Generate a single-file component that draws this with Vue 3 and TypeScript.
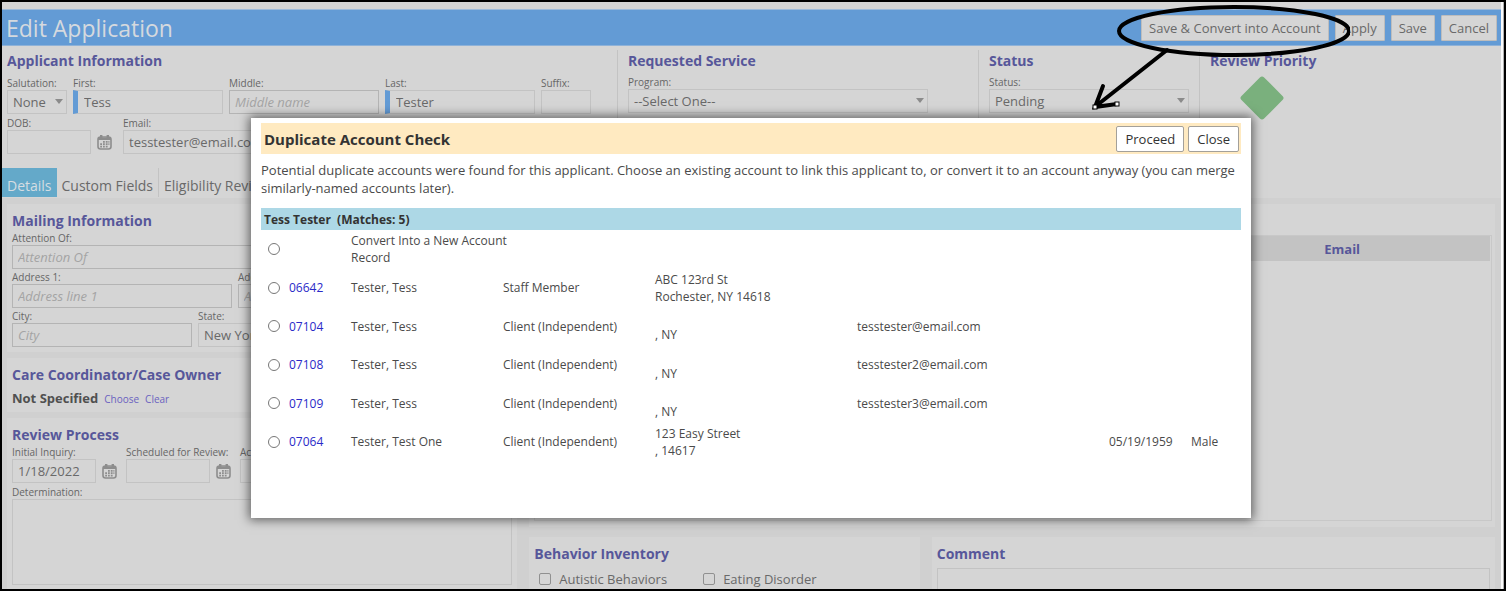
<script setup lang="ts">
import { ref } from 'vue'

interface Match {
  id: string
  name: string[]
  type: string
  address: string[]
  email: string
  dob: string
  sex: string
}

const matches: Match[] = [
  { id: '', name: ['Convert Into a New Account', 'Record'], type: '', address: [], email: '', dob: '', sex: '' },
  { id: '06642', name: ['Tester, Tess'], type: 'Staff Member', address: ['ABC 123rd St', 'Rochester, NY 14618'], email: '', dob: '', sex: '' },
  { id: '07104', name: ['Tester, Tess'], type: 'Client (Independent)', address: ['', ', NY'], email: 'tesstester@email.com', dob: '', sex: '' },
  { id: '07108', name: ['Tester, Tess'], type: 'Client (Independent)', address: ['', ', NY'], email: 'tesstester2@email.com', dob: '', sex: '' },
  { id: '07109', name: ['Tester, Tess'], type: 'Client (Independent)', address: ['', ', NY'], email: 'tesstester3@email.com', dob: '', sex: '' },
  { id: '07064', name: ['Tester, Test One'], type: 'Client (Independent)', address: ['123 Easy Street', ', 14617'], email: '', dob: '05/19/1959', sex: 'Male' },
]
const chosen = ref<string | null>(null)
const actions = ['Save & Convert into Account', 'Apply', 'Save', 'Cancel']
const tabs = ['Details', 'Custom Fields', 'Eligibility Review']
const behaviors = ['Autistic Behaviors', 'Eating Disorder']
</script>

<template>
  <div class="frame">
    <svg class="defs" aria-hidden="true">
      <symbol id="calendar" viewBox="0 0 15 16">
        <rect x="1" y="3" width="13" height="12" rx="2.5" fill="none" stroke="currentColor" stroke-width="1.6" />
        <path d="M1 3.5h13v2.5H1zM3 1h2.4v3H3zM9.6 1H12v3H9.6z" fill="currentColor" />
        <path d="M6 7.8h1.8M8.8 7.8h1.8M11.4 7.8h1M3.2 10.2H5M6 10.2h1.8M8.8 10.2h1.8M11.4 10.2h1M3.2 12.6H5M6 12.6h1.8M8.8 12.6h1.8" stroke="currentColor" stroke-width="1.7" />
      </symbol>
    </svg>

    <div class="page">
      <header class="bar">
        <h1>Edit Application</h1>
        <div class="actions">
          <button v-for="a in actions" :key="a" type="button">{{ a }}</button>
        </div>
      </header>

      <div class="summary">
        <section class="applicant">
          <h2>Applicant Information</h2>
          <div class="fields first-row">
            <div class="field w60">
              <label for="sal">Salutation:</label>
              <span class="select"><select id="sal"><option>None</option></select></span>
            </div>
            <div class="field w150"><label for="first">First:</label><input id="first" class="required" value="Tess"></div>
            <div class="field w150"><label for="middle">Middle:</label><input id="middle" class="empty" placeholder="Middle name"></div>
            <div class="field w150"><label for="last">Last:</label><input id="last" class="required" value="Tester"></div>
            <div class="field w50"><label for="suffix">Suffix:</label><input id="suffix"></div>
          </div>
          <div class="fields">
            <div class="field w84"><label for="dob">DOB:</label><input id="dob"></div>
            <button class="cal" type="button" aria-label="Pick date of birth"><svg><use href="#calendar" /></svg></button>
            <div class="field w220"><label for="email">Email:</label><input id="email" value="tesstester@email.com"></div>
          </div>
          <nav class="tabs">
            <button v-for="(t, i) in tabs" :key="t" type="button" :class="{ active: i === 0 }">{{ t }}</button>
          </nav>
        </section>
        <section class="ruled">
          <h2>Requested Service</h2>
          <div class="field w300">
            <label for="program">Program:</label>
            <span class="select"><select id="program"><option>--Select One--</option></select></span>
          </div>
        </section>
        <section class="ruled">
          <h2>Status</h2>
          <div class="field w200">
            <label for="status">Status:</label>
            <span class="select"><select id="status"><option>Pending</option></select></span>
          </div>
        </section>
        <section class="ruled">
          <h2>Review Priority</h2>
          <svg class="diamond" viewBox="0 0 46 46" role="img" aria-label="Low priority"><rect x="7" y="7" width="32" height="32" rx="3" transform="rotate(45 23 23)" /></svg>
        </section>
      </div>

      <main class="content">
        <div class="column">
          <section class="panel mailing">
            <h2>Mailing Information</h2>
            <div class="field"><label for="attn">Attention Of:</label><input id="attn" class="empty" placeholder="Attention Of"></div>
            <div class="fields">
              <div class="field w220"><label for="a1">Address 1:</label><input id="a1" class="empty" placeholder="Address line 1"></div>
              <div class="field w220"><label for="a2">Address 2:</label><input id="a2" class="empty" placeholder="Address line 2"></div>
            </div>
            <div class="fields">
              <div class="field w180"><label for="city">City:</label><input id="city" class="empty" placeholder="City"></div>
              <div class="field w150"><label for="state">State:</label><span class="select"><select id="state"><option>New York</option></select></span></div>
            </div>
          </section>
          <section class="panel care">
            <h2>Care Coordinator/Case Owner</h2>
            <p><strong>Not Specified</strong><a href="#choose">Choose</a><a href="#clear">Clear</a></p>
          </section>
          <section class="panel review">
            <h2>Review Process</h2>
            <div class="fields">
              <div class="field w84"><label for="inq">Initial Inquiry:</label><input id="inq" value="1/18/2022"></div>
              <button class="cal" type="button" aria-label="Pick inquiry date"><svg><use href="#calendar" /></svg></button>
              <div class="field w84"><label for="sched">Scheduled for Review:</label><input id="sched"></div>
              <button class="cal" type="button" aria-label="Pick review date"><svg><use href="#calendar" /></svg></button>
              <div class="field w84"><label for="act">Actual:</label><input id="act"></div>
            </div>
            <div class="field"><label for="det">Determination:</label><textarea id="det"></textarea></div>
          </section>
        </div>
        <div class="column wide">
          <section class="panel contacts">
            <h2>Contacts</h2>
            <div class="grid-box">
              <table>
                <thead><tr><th class="rest">Name</th><th>Email</th></tr></thead>
              </table>
            </div>
          </section>
          <div class="pair">
            <section class="panel behavior">
              <h2>Behavior Inventory</h2>
              <div class="checks">
                <label v-for="b in behaviors" :key="b"><input type="checkbox">{{ b }}</label>
              </div>
            </section>
            <section class="panel comment">
              <h2 id="comment-title">Comment</h2>
              <textarea aria-labelledby="comment-title"></textarea>
            </section>
          </div>
        </div>
      </main>
    </div>
    <div class="scroll" aria-hidden="true"></div>

    <div class="overlay">
      <div class="modal" role="dialog" aria-labelledby="dup-title">
        <div class="modal-head">
          <h2 id="dup-title">Duplicate Account Check</h2>
          <button type="button">Proceed</button>
          <button type="button">Close</button>
        </div>
        <p class="message">Potential duplicate accounts were found for this applicant. Choose an existing account to link this applicant to, or convert it to an account anyway (you can merge similarly-named accounts later).</p>
        <table class="matches">
          <colgroup><col class="c-pick"><col class="c-id"><col class="c-name"><col class="c-name"><col class="c-addr"><col class="c-mail"><col class="c-dob"><col></colgroup>
          <thead><tr><th colspan="8">Tess Tester &nbsp;(Matches: 5)</th></tr></thead>
          <tbody>
            <tr v-for="m in matches" :key="m.id">
              <td class="pick"><input v-model="chosen" type="radio" name="match" :value="m.id" :aria-label="m.id || m.name.join(' ')"></td>
              <td><a v-if="m.id" :href="'#' + m.id">{{ m.id }}</a></td>
              <td><div v-for="line in m.name" :key="line" class="line">{{ line }}</div></td>
              <td>{{ m.type }}</td>
              <td><div v-for="(line, i) in m.address" :key="i" class="line">{{ line }}</div></td>
              <td>{{ m.email }}</td>
              <td>{{ m.dob }}</td>
              <td>{{ m.sex }}</td>
            </tr>
          </tbody>
        </table>
      </div>
    </div>

    <svg class="callout" viewBox="0 0 260 120" aria-hidden="true">
      <ellipse cx="144" cy="31" rx="115" ry="24" />
      <path d="M77 50L6 106M13 86L5 107L27 104" />
      <rect x="3" y="105" width="4" height="4" />
      <rect x="25" y="102" width="4" height="4" />
    </svg>
  </div>
</template>

<style>
body { margin: 0; }
</style>

<style scoped>
* { box-sizing: border-box; }
.frame {
  position: relative;
  display: flex;
  height: 100vh;
  overflow: hidden;
  border: 2px solid #000;
  background: #d5d5d5;
  color: #696969;
  font-family: "Open Sans", "Noto Sans", sans-serif;
  font-size: 13px;
}
button, input, select, textarea { font: inherit; color: inherit; margin: 0; border-radius: 0; }
h1, h2, p { margin: 0; }
.defs { position: absolute; width: 0; height: 0; }
.page { flex: 1; min-width: 0; padding-top: 7px; display: flex; flex-direction: column; }
.scroll { width: 3px; background: #b0b0b0; border-left: 2px solid #fafafa; }
.bar { flex: none; height: 37px; display: flex; align-items: center; justify-content: space-between; padding: 0 4px; background: #639bd5; border-top: 1px solid #9dbbdb; border-bottom: 1px solid #8fb2d8; }
h1 { font-size: 23px; line-height: 34px; font-weight: 400; color: #d5d9de; }
.actions { display: flex; gap: 6px; }
.actions button { height: 26px; padding: 0 7px; border: 1px solid #bdbdbd; background: #d5d5d5; border-radius: 1px; }
h2 { font-size: 14px; line-height: 20px; font-weight: 700; color: #57579a; }
.summary { flex: none; height: 152px; display: grid; grid-template-columns: 615fr 361fr 221fr 302fr; padding-top: 4px; }
.summary section { padding: 1px 0 0 5px; min-width: 0; }
.summary .ruled { border-left: 1px solid #c3c3c3; padding-left: 10px; }
.summary .ruled .field { margin-top: 4px; max-width: calc(100% - 10px); }
.fields { display: flex; gap: 6px; }
.field { display: flex; flex-direction: column; min-width: 0; }
.field > label { font-size: 10px; line-height: 14px; white-space: nowrap; color: #666; }
.field input, select { width: 100%; height: 24px; padding: 0 5px; border: 1px solid #c3c3c3; background: #d5d5d5; outline: 0; }
.field input.empty { border-color: #b4b4b4; }
.field input.required { border-left: 5px solid #639bd5; padding-left: 6px; }
input::placeholder { color: #a4a4a4; font-style: italic; opacity: 1; }
.select { position: relative; display: block; }
.select::after { content: ""; position: absolute; right: 4px; top: 9px; border: 4px solid transparent; border-top: 5px solid #8b8b8b; border-bottom: 0; pointer-events: none; }
select { appearance: none; }
.w50 { width: 50px; }
.w60 { width: 60px; }
.w84 { width: 84px; }
.w150 { width: 150px; }
.w180 { width: 180px; }
.w200 { width: 200px; }
.w220 { width: 220px; }
.w300 { width: 300px; }
.first-row { margin: 5px 0 2px; }
.cal { align-self: flex-end; width: 20px; height: 24px; padding: 0; border: 0; background: none; color: #8d8d8d; display: flex; align-items: center; }
.review .cal { width: 18px; }
.cal svg { width: 15px; height: 16px; }
.tabs { display: flex; margin: 14px 0 0 -5px; font-size: 14px; }
.tabs button { height: 29px; padding: 5px 5px 0; border: 0; border-right: 1px solid #c3c3c3; background: #d5d5d5; }
.tabs .active { background: #64a9c9; color: #d5dde2; border-right: 0; }
.content { flex: 1; min-height: 0; display: grid; grid-template-columns: 511fr 967fr; gap: 12px; padding: 6px 6px 0 5px; background: #d0d0d0; }
.column { display: flex; flex-direction: column; gap: 6px; min-width: 0; }
.wide { gap: 10px; }
.panel { background: #d5d5d5; padding: 7px 5px 5px; }
.mailing { height: 148px; }
.mailing .fields { margin-top: 1px; }
.care { padding-bottom: 0; }
.care p { display: flex; gap: 6px; align-items: baseline; line-height: 26px; }
.care strong { color: #505050; }
.care a { font-size: 10px; color: #6a62c0; text-decoration: none; }
.review { flex: 1; }
.review .fields { margin-bottom: 2px; }
.review textarea { height: 86px; }
textarea { display: block; width: 100%; resize: none; background: #d5d5d5; border: 1px solid #c3c3c3; }
.contacts { height: 323px; padding: 11px 3px 6px 5px; }
.grid-box { height: 286px; border: 1px solid #c8c8c8; padding: 0 1px; }
.grid-box table { width: 100%; border-collapse: collapse; table-layout: fixed; }
.grid-box th { height: 25px; padding: 0; background: #c3c3c3; color: #57579a; width: 31%; }
.grid-box th.rest { width: 69%; }
.pair { display: grid; grid-template-columns: 391fr 564fr; gap: 12px; flex: 1; }
.checks { display: flex; gap: 36px; padding: 6px 5px; }
.checks label { display: flex; align-items: center; gap: 8px; white-space: nowrap; }
.checks input { appearance: none; width: 12px; height: 12px; border: 1px solid #909090; border-radius: 2px; }
.comment textarea { height: 60px; margin-top: 4px; }
.overlay { position: absolute; inset: 0 4px 0 0; padding-top: 116px; display: flex; justify-content: center; align-items: flex-start; }
.modal { width: 1000px; max-width: 90%; min-height: 400px; padding: 5px 10px; background: #fff; color: #4a4a4a; box-shadow: 0 0 10px 2px rgba(0, 0, 0, .55); }
.modal-head { display: flex; gap: 4px; align-items: center; height: 31px; padding: 0 2px 0 3px; background: #ffeac1; }
.modal-head h2 { flex: 1; color: #333; font-size: 15px; }
.modal-head button { height: 26px; padding: 0 8px; border: 1px solid #a3a09a; border-radius: 2px; background: #fff; color: #333; }
.message { padding-top: 7px; line-height: 18px; height: 54px; }
.matches { width: 100%; height: 253px; table-layout: fixed; border-collapse: collapse; font-size: 12px; line-height: 17px; }
.matches th { height: 22px; padding: 0 3px; background: #add8e6; text-align: left; color: #333; }
.matches td { padding: 0 2px; }
.matches a { color: #2a2ac8; text-decoration: none; }
.matches input { display: block; appearance: none; width: 12px; height: 12px; margin-left: 5px; border: 1px solid #777; border-radius: 50%; }
.line { min-height: 17px; white-space: nowrap; }
.c-pick { width: 26px; }
.c-id { width: 62px; }
.c-name { width: 152px; }
.c-addr { width: 202px; }
.c-mail { width: 252px; }
.c-dob { width: 82px; }
.callout { position: absolute; top: -2px; right: 154px; width: 260px; height: 120px; fill: none; stroke: #000; stroke-width: 4; stroke-linecap: round; pointer-events: none; }
.callout rect { fill: #fff; stroke-width: 1; }
.diamond { display: block; width: 46px; height: 46px; margin: 4px 0 0 29px; fill: #7ab07d; }
</style>
